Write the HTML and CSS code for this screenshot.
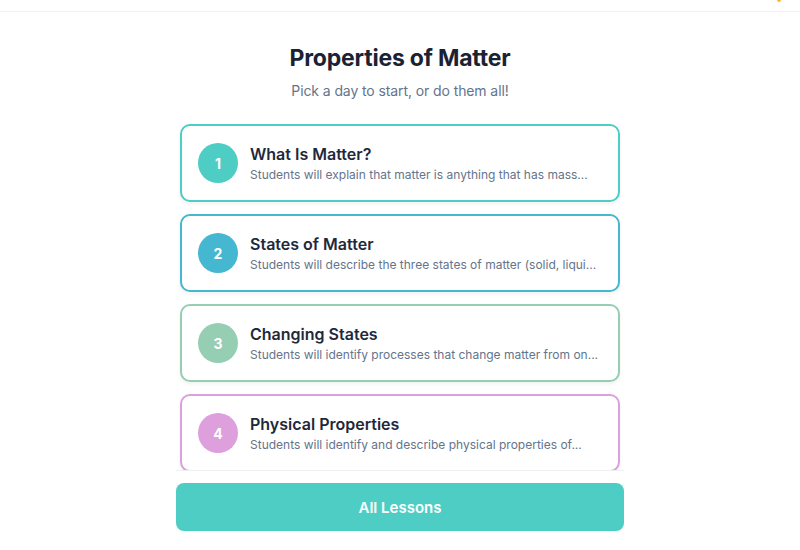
FILE: index.html
```html
<!DOCTYPE html>
<html lang="en">
<head>
<meta charset="utf-8">
<title>Properties of Matter</title>
<link rel="stylesheet" href="styles.css">
</head>
<body>
<header class="topbar"><span class="spark"></span></header>
<main class="page">
  <h1 class="title">Properties of Matter</h1>
  <p class="subtitle">Pick a day to start, or do them all!</p>
  <div class="list">
    <div class="card c1">
      <div class="num">1</div>
      <div class="text">
        <div class="name">What Is Matter?</div>
        <div class="desc">Students will explain that matter is anything that has mass...</div>
      </div>
    </div>
    <div class="card c2">
      <div class="num">2</div>
      <div class="text">
        <div class="name">States of Matter</div>
        <div class="desc">Students will describe the three states of matter (solid, liqui...</div>
      </div>
    </div>
    <div class="card c3">
      <div class="num">3</div>
      <div class="text">
        <div class="name">Changing States</div>
        <div class="desc">Students will identify processes that change matter from on...</div>
      </div>
    </div>
    <div class="card c4">
      <div class="num">4</div>
      <div class="text">
        <div class="name">Physical Properties</div>
        <div class="desc">Students will identify and describe physical properties of...</div>
      </div>
    </div>
  </div>
  <div class="footer">
    <button class="all">All Lessons</button>
  </div>
</main>
</body>
</html>
```

FILE: styles.css
```css
* { box-sizing: border-box; }
html, body { margin: 0; padding: 0; background: #ffffff; }
body {
  font-family: Inter, "Noto Sans", sans-serif;
  color: #1e293b;
  height: 550px;
  overflow: hidden;
}
.topbar {
  height: 12px;
  border-bottom: 1px solid #f1f1f3;
  display: flex;
  justify-content: flex-end;
  align-items: flex-start;
  padding-right: 19px;
}
.spark {
  width: 4px;
  height: 2px;
  background: #f6b73c;
  border-radius: 0 0 2px 2px;
}
.page {
  width: 448px;
  margin: 0 auto;
  display: flex;
  flex-direction: column;
}
.title {
  margin: 30px 0 0;
  font-size: 23px;
  line-height: 32px;
  font-weight: 700;
  text-align: center;
  color: #1a2233;
  letter-spacing: -0.2px;
}
.subtitle {
  margin: 7px 0 0;
  font-size: 14px;
  line-height: 20px;
  text-align: center;
  color: #64748b;
  letter-spacing: -0.1px;
}
.list {
  margin-top: 19px;
  height: 350px;
  overflow: hidden;
  padding: 4px;
  display: flex;
  flex-direction: column;
  gap: 12px;
}
.card {
  flex: none;
  display: flex;
  align-items: center;
  gap: 12px;
  padding: 16px;
  border: 2px solid;
  border-radius: 10px;
  background: #fff;
  box-shadow: 0 2px 4px rgba(0,0,0,0.06);
}
.num {
  flex: none;
  width: 40px;
  height: 40px;
  border-radius: 50%;
  display: flex;
  align-items: center;
  justify-content: center;
  color: #fff;
  font-weight: 700;
  font-size: 14px;
}
.c1 { border-color: #4ecdc4; }
.c1 .num { background: #4ecdc4; }
.c2 { border-color: #45b7d1; }
.c2 .num { background: #45b7d1; }
.c3 { border-color: #96ceb4; }
.c3 .num { background: #96ceb4; }
.c4 { border-color: #dda0dd; }
.c4 .num { background: #dda0dd; }
.text { min-width: 0; flex: 1; }
.name {
  font-size: 16px;
  line-height: 24px;
  font-weight: 600;
  color: #1e293b;
}
.desc {
  font-size: 12px;
  line-height: 18px;
  color: #64748b;
  white-space: nowrap;
  overflow: hidden;
  text-overflow: ellipsis;
}
.footer {
  border-top: 1px solid #eef0f2;
  padding-top: 12px;
}
.all {
  display: block;
  width: 100%;
  height: 48px;
  border: 0;
  border-radius: 8px;
  background: #4ecdc4;
  color: #fff;
  font-family: inherit;
  font-size: 15px;
  font-weight: 600;
  cursor: pointer;
}
```
